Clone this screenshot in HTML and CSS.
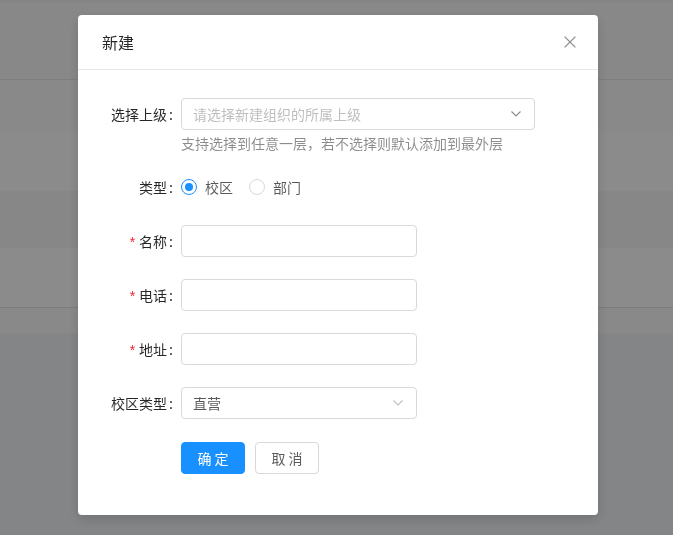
FILE: index.html
```html
<!DOCTYPE html>
<html lang="zh-CN">
<head>
<meta charset="utf-8">
<title>新建</title>
<link rel="stylesheet" href="styles.css">
</head>
<body>
<div class="page">
  <div class="strip"></div>
  <div class="page-head"></div>
  <div class="trow trow-a"></div>
  <div class="trow trow-b"></div>
  <div class="trow trow-c"></div>
  <div class="trow trow-b"></div>
  <div class="trow trow-foot"></div>
</div>

<div class="mask">
  <div class="modal">
    <div class="modal-header">
      <div class="modal-title">新建</div>
      <button class="modal-close" aria-label="Close">
        <svg width="12" height="12" viewBox="0 0 12 12"><path d="M0.6 0.6 L11.4 11.4 M11.4 0.6 L0.6 11.4" stroke="#8c8c8c" stroke-width="1.3" fill="none"/></svg>
      </button>
    </div>
    <div class="modal-body">
      <div class="row row-help">
        <label class="lbl">选择上级</label>
        <div class="ctrl">
          <div class="select select-wide">
            <span class="placeholder">请选择新建组织的所属上级</span>
            <svg class="arrow" width="10" height="6" viewBox="0 0 10 6"><path d="M0.5 0.5 L5 5 L9.5 0.5" stroke="#8c8c8c" stroke-width="1.2" fill="none"/></svg>
          </div>
          <div class="help">支持选择到任意一层，若不选择则默认添加到最外层</div>
        </div>
      </div>

      <div class="row">
        <label class="lbl">类型</label>
        <div class="ctrl radios">
          <span class="radio-wrap"><span class="radio checked"></span><span class="radio-text">校区</span></span>
          <span class="radio-wrap"><span class="radio"></span><span class="radio-text">部门</span></span>
        </div>
      </div>

      <div class="row">
        <label class="lbl req">名称</label>
        <div class="ctrl"><div class="input"></div></div>
      </div>

      <div class="row">
        <label class="lbl req">电话</label>
        <div class="ctrl"><div class="input"></div></div>
      </div>

      <div class="row">
        <label class="lbl req">地址</label>
        <div class="ctrl"><div class="input"></div></div>
      </div>

      <div class="row">
        <label class="lbl">校区类型</label>
        <div class="ctrl">
          <div class="select select-half">
            <span class="value">直营</span>
            <svg class="arrow" width="10" height="6" viewBox="0 0 10 6"><path d="M0.5 0.5 L5 5 L9.5 0.5" stroke="#bfbfbf" stroke-width="1.2" fill="none"/></svg>
          </div>
        </div>
      </div>

      <div class="row row-last">
        <div class="lbl lbl-empty"></div>
        <div class="ctrl buttons">
          <button class="btn btn-primary">确 定</button>
          <button class="btn">取 消</button>
        </div>
      </div>
    </div>
  </div>
</div>
</body>
</html>
```

FILE: styles.css
```css
* { box-sizing: border-box; }
html, body { margin: 0; padding: 0; }
body {
  width: 673px;
  height: 535px;
  overflow: hidden;
  background: #f0f2f5;
  font-family: "Noto Sans CJK SC", "Noto Sans", sans-serif;
  font-size: 14px;
  color: rgba(0,0,0,.65);
}

/* background page */
.page { width: 100%; }
.strip { height: 3px; background: #f0f2f5; }
.page-head { height: 77px; background: #f7f7f7; border-bottom: 1px solid #e6e6e6; }
.trow { background: #fafafa; }
.trow-a { height: 52px; background: #fafafa; }
.trow-b { height: 59px; background: #fdfdfd; }
.trow-c { height: 57px; background: #f6f6f6; }
.trow-foot { height: 26px; background: #fafafa; border-top: 1px solid #e2e2e2; }

/* mask + modal */
.mask {
  position: fixed;
  inset: 0;
  background: rgba(0,0,0,.45);
}
.modal {
  width: 520px;
  margin: 15px 0 0 78px;
  background: #fff;
  border-radius: 4px;
  box-shadow: 0 4px 12px rgba(0,0,0,.15);
}
.modal-header {
  height: 55px;
  padding: 16px 24px;
  border-bottom: 1px solid #e8e8e8;
  display: flex;
  align-items: center;
  justify-content: space-between;
}
.modal-title {
  font-size: 16px;
  line-height: 22px;
  color: rgba(0,0,0,.85);
}
.modal-close {
  border: 0;
  background: none;
  padding: 0;
  width: 12px;
  height: 12px;
  margin-right: -2px;
  display: flex;
}

.modal-body {
  padding: 28px 24px 41px;
}
.row {
  display: flex;
  align-items: flex-start;
  margin-bottom: 22px;
}
.row-help { margin-bottom: 17px; }
.row-last { padding-top: 1px; margin-bottom: 0; }

.lbl {
  width: 79px;
  flex: none;
  text-align: right;
  line-height: 32px;
  color: rgba(0,0,0,.85);
  white-space: nowrap;
}
.lbl::after {
  content: ":";
  margin: 0 8px 0 2px;
}
.lbl-empty::after { content: none; }
.req::before {
  content: "*";
  display: inline-block;
  margin-right: 4px;
  color: #f5222d;
  font-family: "Liberation Sans", sans-serif;
  font-size: 14px;
  line-height: 1;
}

.ctrl { flex: none; }

.select, .input {
  height: 32px;
  border: 1px solid #d9d9d9;
  border-radius: 4px;
  background: #fff;
}
.select {
  display: flex;
  align-items: center;
  justify-content: space-between;
  padding: 0 13px 0 11px;
}
.select-wide { width: 354px; }
.select-half { width: 236px; }
.input { width: 236px; }
.placeholder { color: #bfbfbf; line-height: 30px; }
.value { color: rgba(0,0,0,.65); line-height: 30px; }
.arrow { display: block; }

.help {
  margin-top: 2px;
  line-height: 22px;
  color: rgba(0,0,0,.45);
}

.radios {
  display: flex;
  align-items: center;
  height: 32px;
}
.radio-wrap {
  display: inline-flex;
  align-items: center;
  margin-right: 8px;
}
.radio {
  width: 16px;
  height: 16px;
  border: 1px solid #d9d9d9;
  border-radius: 50%;
  position: relative;
  background: #fff;
}
.radio.checked { border-color: #1890ff; }
.radio.checked::after {
  content: "";
  position: absolute;
  left: 3px;
  top: 3px;
  width: 8px;
  height: 8px;
  border-radius: 50%;
  background: #1890ff;
}
.radio-text {
  padding: 0 8px;
  color: rgba(0,0,0,.65);
  line-height: 22px;
}

.buttons { display: flex; gap: 10px; }
.btn {
  height: 32px;
  width: 64px;
  padding: 0;
  border: 1px solid #d9d9d9;
  border-radius: 4px;
  background: #fff;
  color: rgba(0,0,0,.65);
  font-family: "Noto Sans CJK SC", "Noto Sans", sans-serif;
  font-size: 14px;
  line-height: 30px;
}
.btn-primary {
  background: #1890ff;
  border-color: #1890ff;
  color: #fff;
}
```
